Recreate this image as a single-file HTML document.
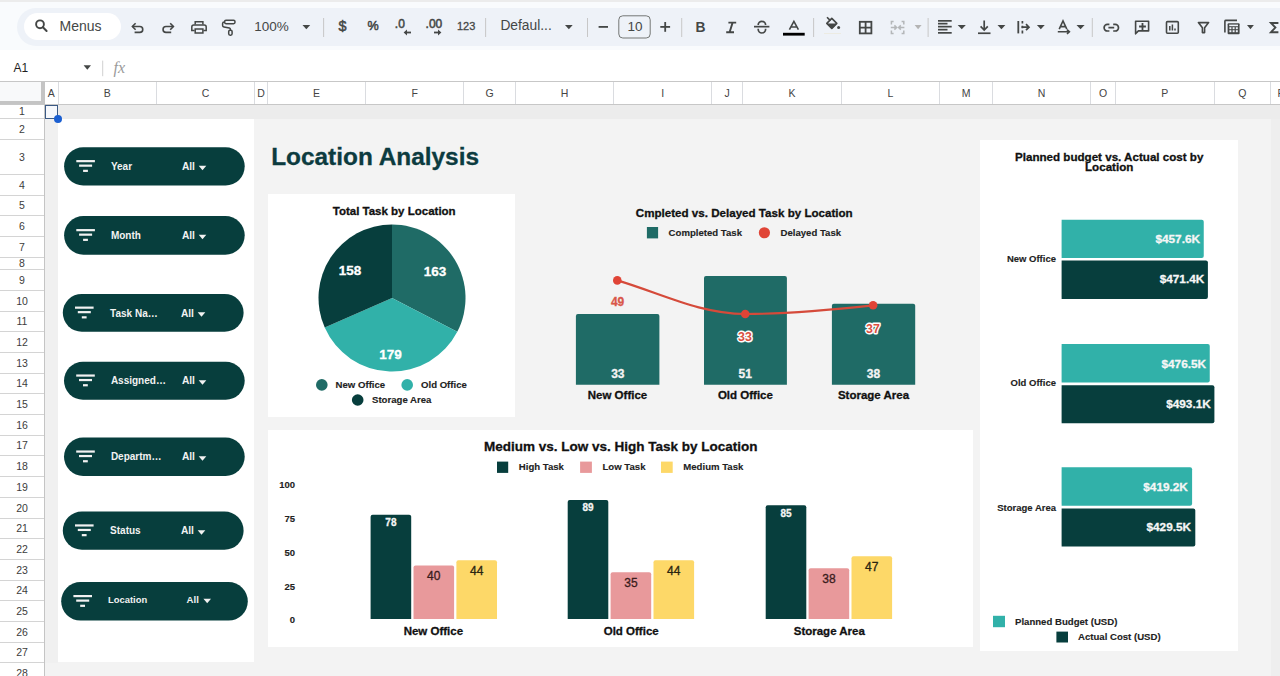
<!DOCTYPE html><html><head><meta charset="utf-8"><style>
*{box-sizing:border-box;margin:0;padding:0}
html,body{width:1280px;height:676px;overflow:hidden}
body{position:relative;background:#fff;font-family:"Liberation Sans",sans-serif;color:#1f1f1f}
div,span,svg{position:absolute}
.t{white-space:nowrap;line-height:1}
.b{font-weight:bold}
</style></head><body>
<div style="left:0px;top:0px;width:1280px;height:2px;background:#ececec;"></div>
<div style="left:0px;top:2px;width:1280px;height:48px;background:#f9fbfd;"></div>
<div style="left:17px;top:8px;width:1300px;height:38px;background:#eef2f8;border-radius:19px"></div>
<div style="left:24px;top:13px;width:97px;height:27px;background:#fff;border-radius:14px"></div>
<div style="left:0px;top:50px;width:1280px;height:31px;background:#fff;"></div>
<svg style="left:0;top:0" width="1280" height="50"><circle cx="40" cy="24.3" r="3.9" stroke="#444746" stroke-width="1.9" fill="none"/><line x1="42.9" y1="27.3" x2="46.6" y2="31" stroke="#444746" stroke-width="2" stroke-linecap="round"/><path d="M132.6 26.5 H139.8 A2.95 2.95 0 0 1 139.8 32.4 H134.6" stroke="#444746" stroke-width="1.6" fill="none"/><path d="M135.6 23.3 L132.4 26.5 L135.6 29.7" stroke="#444746" stroke-width="1.6" fill="none"/><path d="M173.2 26.5 H166 A2.95 2.95 0 0 0 166 32.4 H171.2" stroke="#444746" stroke-width="1.6" fill="none"/><path d="M170.2 23.3 L173.4 26.5 L170.2 29.7" stroke="#444746" stroke-width="1.6" fill="none"/><path d="M195.2 24.6 V21.7 H202.9 V24.6" stroke="#444746" stroke-width="1.5" fill="none"/><path d="M194.6 30.6 H191.8 V27 Q191.8 25 193.8 25 H204.2 Q206.2 25 206.2 27 V30.6 H203.4" stroke="#444746" stroke-width="1.5" fill="none"/><rect x="195.2" y="29" width="7.7" height="4" stroke="#444746" stroke-width="1.5" fill="none"/><rect x="224.6" y="20.3" width="10.4" height="3.4" rx="1.4" stroke="#444746" stroke-width="1.5" fill="none"/><path d="M224.4 22 Q222.6 22 222.6 23.6 V25.4 Q222.6 26.6 224 26.9 L229.4 28 Q230.4 28.2 230.4 29.4 V30" stroke="#444746" stroke-width="1.5" fill="none"/><rect x="228.7" y="30.2" width="3.4" height="5" rx="1.4" stroke="#444746" stroke-width="1.5" fill="none"/><path d="M302.5 25 H310.2 L306.35 29.2 Z" fill="#444746"/><path d="M565 25 H572.7 L568.85 29.2 Z" fill="#444746"/><path d="M914.6 25 H921.6 L918.1 29.2 Z" fill="#b4b4b4"/><path d="M957.7 25 H965.8 L961.75 29.2 Z" fill="#444746"/><path d="M997.5 25 H1005.4 L1001.45 29.2 Z" fill="#444746"/><path d="M1036.9 25 H1044.75 L1040.825 29.2 Z" fill="#444746"/><path d="M1076.5 25 H1084.6 L1080.55 29.2 Z" fill="#444746"/><path d="M1247 25 H1253.9 L1250.45 29.2 Z" fill="#444746"/><rect x="323.1" y="18" width="1" height="19" fill="#c7c7c7"/><rect x="485.1" y="18" width="1" height="19" fill="#c7c7c7"/><rect x="587.0" y="18" width="1" height="19" fill="#c7c7c7"/><rect x="681.2" y="18" width="1" height="19" fill="#c7c7c7"/><rect x="813.1" y="18" width="1" height="19" fill="#c7c7c7"/><rect x="927.6" y="18" width="1" height="19" fill="#c7c7c7"/><rect x="1091.8" y="18" width="1" height="19" fill="#c7c7c7"/><rect x="598.6" y="26" width="9.4" height="1.8" fill="#444746"/><rect x="660.3" y="26" width="9.8" height="1.8" fill="#444746"/><rect x="664.3" y="22" width="1.8" height="9.8" fill="#444746"/><rect x="618.8" y="15.8" width="31.4" height="22.2" rx="4" stroke="#747775" stroke-width="1" fill="none"/><path d="M728.4 22.6 H736.2 M726.2 32.2 H734 M732.6 22.6 L729.6 32.2" stroke="#444746" stroke-width="1.9" fill="none"/><path d="M758.2 25 A3.7 3.7 0 0 1 765.6 25" stroke="#444746" stroke-width="1.7" fill="none"/><rect x="754" y="25.8" width="15.4" height="1.7" fill="#444746"/><path d="M758.2 28.8 V29.3 A3.7 3.7 0 0 0 765.6 29.3 V28.8" stroke="#444746" stroke-width="1.7" fill="none"/><path d="M789.4 29.7 L793.9 21.4 L798.4 29.7 M790.9 27 H796.9" stroke="#444746" stroke-width="1.6" fill="none"/><rect x="783" y="32.8" width="21.7" height="2.8" fill="#000"/><path d="M826.8 23.4 L831.8 18.4 L836.8 23.4 L831.8 28.4 Z" stroke="#444746" stroke-width="1.6" fill="none" stroke-linejoin="round"/><path d="M826.4 23.6 H837.2 L831.8 29 Z" fill="#444746"/><path d="M827 17.2 L830.4 20.6" stroke="#444746" stroke-width="1.6"/><circle cx="838.6" cy="27.6" r="1.5" fill="#444746"/><rect x="824" y="33" width="17" height="1" fill="#ecebe2"/><rect x="859.8" y="21.8" width="11.6" height="11.6" stroke="#444746" stroke-width="1.8" fill="none"/><path d="M865.6 21.8 V33.4 M859.8 27.6 H871.4" stroke="#444746" stroke-width="1.8"/><path d="M893.6 21.6 H891.4 V24.6 M891.4 30.4 V33.4 H893.6 M901.6 21.6 H903.8 V24.6 M903.8 30.4 V33.4 H901.6" stroke="#b4b7b9" stroke-width="1.5" fill="none"/><path d="M890.8 27.5 H896.4 M894.4 25.4 L896.6 27.5 L894.4 29.6 M904.4 27.5 H898.8 M900.8 25.4 L898.6 27.5 L900.8 29.6" stroke="#b4b7b9" stroke-width="1.5" fill="none"/><rect x="938" y="20.0" width="13.7" height="1.7" fill="#444746"/><rect x="938" y="22.8" width="9.5" height="1.7" fill="#444746"/><rect x="938" y="25.8" width="13.7" height="1.7" fill="#444746"/><rect x="938" y="28.8" width="9.5" height="1.7" fill="#444746"/><rect x="938" y="31.999999999999996" width="13.7" height="1.7" fill="#444746"/><path d="M984.2 20.4 V29.8 M980.6 26.4 L984.2 30 L987.8 26.4" stroke="#444746" stroke-width="1.7" fill="none"/><rect x="978" y="32.4" width="12.5" height="1.7" fill="#444746"/><rect x="1017.4" y="21" width="1.8" height="12.4" fill="#444746"/><path d="M1022.4 21 V23.6 M1022.4 25.8 V28.2 M1022.4 30.4 V33.4" stroke="#444746" stroke-width="1.7"/><path d="M1021.6 27.2 H1029 M1026 24.2 L1029 27.2 L1026 30.2" stroke="#444746" stroke-width="1.7" fill="none"/><path d="M1059.2 29.2 L1063 21 L1066.8 29.2 M1060.4 26.6 H1065.6" stroke="#444746" stroke-width="1.6" fill="none"/><path d="M1057.8 31.8 H1069.4 M1067 29.6 L1069.4 31.8 L1067 34" stroke="#444746" stroke-width="1.6" fill="none"/><path d="M1109.4 24.4 H1107.4 A3.3 3.3 0 0 0 1107.4 31 H1109.4 M1113.2 24.4 H1115.2 A3.3 3.3 0 0 1 1115.2 31 H1113.2 M1108.4 27.7 H1114.2" stroke="#444746" stroke-width="1.7" fill="none"/><path d="M1135.6 33.8 V21.2 H1148.6 V30.9 H1138.4 Z" stroke="#444746" stroke-width="1.6" fill="none" stroke-linejoin="round"/><path d="M1142.5 23.1 V29.9 M1139.1 26.5 H1145.9" stroke="#444746" stroke-width="1.8"/><rect x="1166.5" y="21.6" width="11.8" height="11.6" rx="1" stroke="#444746" stroke-width="1.6" fill="none"/><path d="M1169.8 26 V30.6 M1172.4 24.4 V30.6 M1175 28.4 V30.6" stroke="#444746" stroke-width="1.5"/><path d="M1198.4 22.6 H1208.6 L1204.6 27.8 V32.6 H1202.4 V27.8 Z" stroke="#444746" stroke-width="1.6" fill="none" stroke-linejoin="round"/><path d="M1224.9 32.4 V21.2 A1 1 0 0 1 1225.9 20.4 H1237" stroke="#444746" stroke-width="1.6" fill="none"/><rect x="1227.6" y="23.2" width="12" height="11" rx="1" fill="#444746"/><rect x="1229.4" y="27.2" width="2" height="2" fill="#eef2f8"/><rect x="1229.4" y="30.2" width="2" height="2" fill="#eef2f8"/><rect x="1232.6" y="27.2" width="2" height="2" fill="#eef2f8"/><rect x="1232.6" y="30.2" width="2" height="2" fill="#eef2f8"/><rect x="1235.8" y="27.2" width="2" height="2" fill="#eef2f8"/><rect x="1235.8" y="30.2" width="2" height="2" fill="#eef2f8"/><rect x="1229.2" y="24.6" width="8.8" height="1.6" fill="#eef2f8"/><path d="M1278.4 23 H1271 L1275.4 27.6 L1271 32.2 H1278.4" stroke="#444746" stroke-width="1.9" fill="none" stroke-linejoin="miter"/></svg>
<span class="t" style="left:59.6px;top:19.1px;font-size:14px;color:#444746;font-weight:normal;">Menus</span>
<span class="t" style="left:254.2px;top:20.3px;font-size:13.5px;color:#444746;font-weight:normal;">100%</span>
<span class="t" style="left:338.4px;top:18.8px;font-size:14.4px;color:#444746;font-weight:normal;-webkit-text-stroke:0.5px #444746">$</span>
<span class="t" style="left:367.4px;top:20.2px;font-size:12.6px;color:#444746;font-weight:normal;-webkit-text-stroke:0.5px #444746">%</span>
<span class="t" style="left:394.8px;top:17.8px;font-size:12px;color:#444746;font-weight:normal;-webkit-text-stroke:0.5px #444746">.0</span>
<svg style="left:0;top:0" width="1280" height="50"><path d="M411 32.5 H405.5" stroke="#444746" stroke-width="1.8"/><path d="M403.6 32.5 L407 29.6 V35.4 Z" fill="#444746"/><path d="M434 32.5 H439.5" stroke="#444746" stroke-width="1.8"/><path d="M441.4 32.5 L438 29.6 V35.4 Z" fill="#444746"/></svg>
<span class="t" style="left:425.6px;top:17.8px;font-size:12px;color:#444746;font-weight:normal;-webkit-text-stroke:0.5px #444746">.00</span>
<span class="t" style="left:457px;top:21.1px;font-size:11px;color:#444746;font-weight:normal;-webkit-text-stroke:0.3px #444746">123</span>
<span class="t" style="left:500.4px;top:19.0px;font-size:13.8px;color:#444746;font-weight:normal;">Defaul...</span>
<span class="t" style="left:627.4px;top:20.3px;font-size:13.5px;color:#444746;font-weight:normal;">10</span>
<span class="t" style="left:695.6px;top:20.6px;font-size:13.8px;color:#444746;font-weight:bold;">B</span>
<span class="t" style="left:13.6px;top:61.6px;font-size:12px;color:#1f1f1f;font-weight:normal;">A1</span>
<svg style="left:0;top:50px" width="200" height="31"><path d="M83.6 15.3 H91 L87.3 19.7 Z" fill="#444746"/><rect x="102.2" y="10.6" width="1" height="15.6" fill="#d0d0d0"/></svg>
<span class="t" style="left:113.6px;top:59.6px;font-size:16px;color:#9a9a9a;font-weight:normal;font-family:'Liberation Serif';font-style:italic">fx</span>
<div style="left:0px;top:81px;width:1280px;height:1px;background:#c7c7c7;"></div>
<div style="left:0px;top:82px;width:1280px;height:22px;background:#fff;"></div>
<div style="left:0px;top:104px;width:1280px;height:1px;background:#c7c7c7;"></div>
<div style="left:0px;top:82px;width:40.5px;height:19px;background:#f8f9fa;"></div>
<div style="left:40.5px;top:82px;width:4.25px;height:22px;background:#c4c4c4;"></div>
<div style="left:0px;top:101px;width:44.75px;height:3.3px;background:#c4c4c4;"></div>
<span class="t" style="left:44.75px;top:88px;width:13.25px;text-align:center;font-size:10.5px;color:#444">A</span>
<div style="left:57.5px;top:82px;width:1px;height:22px;background:#dadce0;"></div>
<span class="t" style="left:58px;top:88px;width:98.5px;text-align:center;font-size:10.5px;color:#444">B</span>
<div style="left:156.0px;top:82px;width:1px;height:22px;background:#dadce0;"></div>
<span class="t" style="left:156.5px;top:88px;width:98.0px;text-align:center;font-size:10.5px;color:#444">C</span>
<div style="left:254.0px;top:82px;width:1px;height:22px;background:#dadce0;"></div>
<span class="t" style="left:254.5px;top:88px;width:13.0px;text-align:center;font-size:10.5px;color:#444">D</span>
<div style="left:267.0px;top:82px;width:1px;height:22px;background:#dadce0;"></div>
<span class="t" style="left:267.5px;top:88px;width:98.0px;text-align:center;font-size:10.5px;color:#444">E</span>
<div style="left:365.0px;top:82px;width:1px;height:22px;background:#dadce0;"></div>
<span class="t" style="left:365.5px;top:88px;width:98.25px;text-align:center;font-size:10.5px;color:#444">F</span>
<div style="left:463.25px;top:82px;width:1px;height:22px;background:#dadce0;"></div>
<span class="t" style="left:463.75px;top:88px;width:51.75px;text-align:center;font-size:10.5px;color:#444">G</span>
<div style="left:515.0px;top:82px;width:1px;height:22px;background:#dadce0;"></div>
<span class="t" style="left:515.5px;top:88px;width:98.0px;text-align:center;font-size:10.5px;color:#444">H</span>
<div style="left:613.0px;top:82px;width:1px;height:22px;background:#dadce0;"></div>
<span class="t" style="left:613.5px;top:88px;width:98.25px;text-align:center;font-size:10.5px;color:#444">I</span>
<div style="left:711.25px;top:82px;width:1px;height:22px;background:#dadce0;"></div>
<span class="t" style="left:711.75px;top:88px;width:30.75px;text-align:center;font-size:10.5px;color:#444">J</span>
<div style="left:742.0px;top:82px;width:1px;height:22px;background:#dadce0;"></div>
<span class="t" style="left:742.5px;top:88px;width:99.0px;text-align:center;font-size:10.5px;color:#444">K</span>
<div style="left:841.0px;top:82px;width:1px;height:22px;background:#dadce0;"></div>
<span class="t" style="left:841.5px;top:88px;width:98.0px;text-align:center;font-size:10.5px;color:#444">L</span>
<div style="left:939.0px;top:82px;width:1px;height:22px;background:#dadce0;"></div>
<span class="t" style="left:939.5px;top:88px;width:53.0px;text-align:center;font-size:10.5px;color:#444">M</span>
<div style="left:992.0px;top:82px;width:1px;height:22px;background:#dadce0;"></div>
<span class="t" style="left:992.5px;top:88px;width:98.25px;text-align:center;font-size:10.5px;color:#444">N</span>
<div style="left:1090.25px;top:82px;width:1px;height:22px;background:#dadce0;"></div>
<span class="t" style="left:1090.75px;top:88px;width:24.75px;text-align:center;font-size:10.5px;color:#444">O</span>
<div style="left:1115.0px;top:82px;width:1px;height:22px;background:#dadce0;"></div>
<span class="t" style="left:1115.5px;top:88px;width:98.75px;text-align:center;font-size:10.5px;color:#444">P</span>
<div style="left:1213.75px;top:82px;width:1px;height:22px;background:#dadce0;"></div>
<span class="t" style="left:1214.25px;top:88px;width:56.25px;text-align:center;font-size:10.5px;color:#444">Q</span>
<div style="left:1270.0px;top:82px;width:1px;height:22px;background:#dadce0;"></div>
<span class="t" style="left:1270.5px;top:88px;width:21.5px;text-align:center;font-size:10.5px;color:#444">R</span>
<div style="left:0px;top:105px;width:44px;height:571px;background:#fff;"></div>
<div style="left:0px;top:118.0px;width:44px;height:1px;background:#d4d4d4;"></div>
<span class="t" style="left:0;top:105.60000000000001px;width:44px;text-align:center;font-size:10.5px;color:#3c3c3c">1</span>
<div style="left:0px;top:138.5px;width:44px;height:1px;background:#d4d4d4;"></div>
<span class="t" style="left:0;top:123.65px;width:44px;text-align:center;font-size:10.5px;color:#3c3c3c">2</span>
<div style="left:0px;top:173.9px;width:44px;height:1px;background:#d4d4d4;"></div>
<span class="t" style="left:0;top:151.6px;width:44px;text-align:center;font-size:10.5px;color:#3c3c3c">3</span>
<div style="left:0px;top:194.5px;width:44px;height:1px;background:#d4d4d4;"></div>
<span class="t" style="left:0;top:179.6px;width:44px;text-align:center;font-size:10.5px;color:#3c3c3c">4</span>
<div style="left:0px;top:215.1px;width:44px;height:1px;background:#d4d4d4;"></div>
<span class="t" style="left:0;top:200.20000000000002px;width:44px;text-align:center;font-size:10.5px;color:#3c3c3c">5</span>
<div style="left:0px;top:235.7px;width:44px;height:1px;background:#d4d4d4;"></div>
<span class="t" style="left:0;top:220.79999999999998px;width:44px;text-align:center;font-size:10.5px;color:#3c3c3c">6</span>
<div style="left:0px;top:256.5px;width:44px;height:1px;background:#d4d4d4;"></div>
<span class="t" style="left:0;top:241.5px;width:44px;text-align:center;font-size:10.5px;color:#3c3c3c">7</span>
<div style="left:0px;top:269.1px;width:44px;height:1px;background:#d4d4d4;"></div>
<span class="t" style="left:0;top:258.2px;width:44px;text-align:center;font-size:10.5px;color:#3c3c3c">8</span>
<div style="left:0px;top:289.8px;width:44px;height:1px;background:#d4d4d4;"></div>
<span class="t" style="left:0;top:274.85px;width:44px;text-align:center;font-size:10.5px;color:#3c3c3c">9</span>
<div style="left:0px;top:310.5px;width:44px;height:1px;background:#d4d4d4;"></div>
<span class="t" style="left:0;top:295.54999999999995px;width:44px;text-align:center;font-size:10.5px;color:#3c3c3c">10</span>
<div style="left:0px;top:331.2px;width:44px;height:1px;background:#d4d4d4;"></div>
<span class="t" style="left:0;top:316.25px;width:44px;text-align:center;font-size:10.5px;color:#3c3c3c">11</span>
<div style="left:0px;top:351.9px;width:44px;height:1px;background:#d4d4d4;"></div>
<span class="t" style="left:0;top:336.94999999999993px;width:44px;text-align:center;font-size:10.5px;color:#3c3c3c">12</span>
<div style="left:0px;top:372.6px;width:44px;height:1px;background:#d4d4d4;"></div>
<span class="t" style="left:0;top:357.65px;width:44px;text-align:center;font-size:10.5px;color:#3c3c3c">13</span>
<div style="left:0px;top:393.3px;width:44px;height:1px;background:#d4d4d4;"></div>
<span class="t" style="left:0;top:378.35px;width:44px;text-align:center;font-size:10.5px;color:#3c3c3c">14</span>
<div style="left:0px;top:414.0px;width:44px;height:1px;background:#d4d4d4;"></div>
<span class="t" style="left:0;top:399.04999999999995px;width:44px;text-align:center;font-size:10.5px;color:#3c3c3c">15</span>
<div style="left:0px;top:434.7px;width:44px;height:1px;background:#d4d4d4;"></div>
<span class="t" style="left:0;top:419.75px;width:44px;text-align:center;font-size:10.5px;color:#3c3c3c">16</span>
<div style="left:0px;top:455.4px;width:44px;height:1px;background:#d4d4d4;"></div>
<span class="t" style="left:0;top:440.44999999999993px;width:44px;text-align:center;font-size:10.5px;color:#3c3c3c">17</span>
<div style="left:0px;top:476.1px;width:44px;height:1px;background:#d4d4d4;"></div>
<span class="t" style="left:0;top:461.15px;width:44px;text-align:center;font-size:10.5px;color:#3c3c3c">18</span>
<div style="left:0px;top:496.8px;width:44px;height:1px;background:#d4d4d4;"></div>
<span class="t" style="left:0;top:481.85px;width:44px;text-align:center;font-size:10.5px;color:#3c3c3c">19</span>
<div style="left:0px;top:517.5px;width:44px;height:1px;background:#d4d4d4;"></div>
<span class="t" style="left:0;top:502.54999999999995px;width:44px;text-align:center;font-size:10.5px;color:#3c3c3c">20</span>
<div style="left:0px;top:538.2px;width:44px;height:1px;background:#d4d4d4;"></div>
<span class="t" style="left:0;top:523.25px;width:44px;text-align:center;font-size:10.5px;color:#3c3c3c">21</span>
<div style="left:0px;top:558.9px;width:44px;height:1px;background:#d4d4d4;"></div>
<span class="t" style="left:0;top:543.9499999999999px;width:44px;text-align:center;font-size:10.5px;color:#3c3c3c">22</span>
<div style="left:0px;top:579.6px;width:44px;height:1px;background:#d4d4d4;"></div>
<span class="t" style="left:0;top:564.65px;width:44px;text-align:center;font-size:10.5px;color:#3c3c3c">23</span>
<div style="left:0px;top:600.3px;width:44px;height:1px;background:#d4d4d4;"></div>
<span class="t" style="left:0;top:585.35px;width:44px;text-align:center;font-size:10.5px;color:#3c3c3c">24</span>
<div style="left:0px;top:621.0px;width:44px;height:1px;background:#d4d4d4;"></div>
<span class="t" style="left:0;top:606.05px;width:44px;text-align:center;font-size:10.5px;color:#3c3c3c">25</span>
<div style="left:0px;top:641.7px;width:44px;height:1px;background:#d4d4d4;"></div>
<span class="t" style="left:0;top:626.75px;width:44px;text-align:center;font-size:10.5px;color:#3c3c3c">26</span>
<div style="left:0px;top:662.4px;width:44px;height:1px;background:#d4d4d4;"></div>
<span class="t" style="left:0;top:647.4499999999999px;width:44px;text-align:center;font-size:10.5px;color:#3c3c3c">27</span>
<div style="left:0px;top:683.1px;width:44px;height:1px;background:#d4d4d4;"></div>
<span class="t" style="left:0;top:668.15px;width:44px;text-align:center;font-size:10.5px;color:#3c3c3c">28</span>
<div style="left:43.8px;top:104px;width:1.2px;height:572px;background:#c4c4c4;"></div>
<div style="left:45px;top:105px;width:1235px;height:571px;background:#f3f3f3;"></div>
<div style="left:45px;top:105px;width:1235px;height:13.5px;background:#ececec;"></div>
<div style="left:45px;top:118.5px;width:13px;height:544px;background:#f0f0f0;"></div>
<div style="left:45px;top:105px;width:13px;height:13.5px;background:#f6f8fc;"></div>
<div style="left:1270.5px;top:118.5px;width:10px;height:560px;background:#eeeeee;"></div>
<div style="left:58px;top:118.5px;width:196px;height:543.5px;background:#fff;"></div>
<svg style="left:0;top:0" width="1280" height="676"><rect x="64.1" y="147.2" width="180.6" height="38.3" rx="19.15" fill="#073e3d"/><rect x="76.3" y="160.04999999999998" width="18.6" height="2.2" fill="#f2f2f2"/><rect x="79.1" y="164.54999999999998" width="13" height="2.2" fill="#f2f2f2"/><rect x="83.1" y="169.75" width="4.8" height="2.2" fill="#f2f2f2"/><text x="110.9" y="170.04999999999998" font-size="10" font-weight="bold" fill="#f2f2f2">Year</text><text x="181.9" y="170.04999999999998" font-size="10.2" font-weight="bold" fill="#f2f2f2">All</text><path d="M198.7 165.85 H206.29999999999998 L202.5 170.35 Z" fill="#f2f2f2"/><rect x="64.1" y="216" width="180.6" height="38.7" rx="19.35" fill="#073e3d"/><rect x="76.3" y="229.04999999999998" width="18.6" height="2.2" fill="#f2f2f2"/><rect x="79.1" y="233.54999999999998" width="13" height="2.2" fill="#f2f2f2"/><rect x="83.1" y="238.75" width="4.8" height="2.2" fill="#f2f2f2"/><text x="110.9" y="239.04999999999998" font-size="10" font-weight="bold" fill="#f2f2f2">Month</text><text x="181.9" y="239.04999999999998" font-size="10.2" font-weight="bold" fill="#f2f2f2">All</text><path d="M198.7 234.85 H206.29999999999998 L202.5 239.35 Z" fill="#f2f2f2"/><rect x="62.8" y="293.9" width="180.8" height="37.9" rx="18.95" fill="#073e3d"/><rect x="75.0" y="306.54999999999995" width="18.6" height="2.2" fill="#f2f2f2"/><rect x="77.8" y="311.04999999999995" width="13" height="2.2" fill="#f2f2f2"/><rect x="81.8" y="316.24999999999994" width="4.8" height="2.2" fill="#f2f2f2"/><text x="110.10000000000001" y="316.54999999999995" font-size="10" font-weight="bold" fill="#f2f2f2">Task Na…</text><text x="180.9" y="316.54999999999995" font-size="10.2" font-weight="bold" fill="#f2f2f2">All</text><path d="M197.7 312.34999999999997 H205.29999999999998 L201.5 316.84999999999997 Z" fill="#f2f2f2"/><rect x="64" y="361.8" width="180.7" height="37.9" rx="18.95" fill="#073e3d"/><rect x="76.2" y="374.45" width="18.6" height="2.2" fill="#f2f2f2"/><rect x="79.0" y="378.95" width="13" height="2.2" fill="#f2f2f2"/><rect x="83.0" y="384.15" width="4.8" height="2.2" fill="#f2f2f2"/><text x="110.9" y="384.45" font-size="10" font-weight="bold" fill="#f2f2f2">Assigned…</text><text x="181.9" y="384.45" font-size="10.2" font-weight="bold" fill="#f2f2f2">All</text><path d="M198.7 380.25 H206.29999999999998 L202.5 384.75 Z" fill="#f2f2f2"/><rect x="64" y="437.6" width="180.7" height="38.3" rx="19.15" fill="#073e3d"/><rect x="76.2" y="450.45" width="18.6" height="2.2" fill="#f2f2f2"/><rect x="79.0" y="454.95" width="13" height="2.2" fill="#f2f2f2"/><rect x="83.0" y="460.15" width="4.8" height="2.2" fill="#f2f2f2"/><text x="110.9" y="460.45" font-size="10" font-weight="bold" fill="#f2f2f2">Departm…</text><text x="181.9" y="460.45" font-size="10.2" font-weight="bold" fill="#f2f2f2">All</text><path d="M198.7 456.25 H206.29999999999998 L202.5 460.75 Z" fill="#f2f2f2"/><rect x="62.8" y="511.5" width="180.8" height="38.3" rx="19.15" fill="#073e3d"/><rect x="75.0" y="524.35" width="18.6" height="2.2" fill="#f2f2f2"/><rect x="77.8" y="528.85" width="13" height="2.2" fill="#f2f2f2"/><rect x="81.8" y="534.05" width="4.8" height="2.2" fill="#f2f2f2"/><text x="110.10000000000001" y="534.35" font-size="10" font-weight="bold" fill="#f2f2f2">Status</text><text x="180.9" y="534.35" font-size="10.2" font-weight="bold" fill="#f2f2f2">All</text><path d="M197.7 530.15 H205.29999999999998 L201.5 534.65 Z" fill="#f2f2f2"/><rect x="61.2" y="582" width="186.6" height="38.6" rx="19.3" fill="#073e3d"/><rect x="73.4" y="595.0" width="18.6" height="2.2" fill="#f2f2f2"/><rect x="76.2" y="599.5" width="13" height="2.2" fill="#f2f2f2"/><rect x="80.2" y="604.6999999999999" width="4.8" height="2.2" fill="#f2f2f2"/><text x="108.10000000000001" y="602.9" font-size="9.4" font-weight="bold" fill="#f2f2f2">Location</text><text x="186.6" y="602.9" font-size="9.6" font-weight="bold" fill="#f2f2f2">All</text><path d="M203.39999999999998 598.6999999999999 H210.99999999999997 L207.2 603.1999999999999 Z" fill="#f2f2f2"/></svg>
<div style="left:267.9px;top:194px;width:246.9px;height:222.5px;background:#fff;"></div>
<div style="left:267.9px;top:429.75px;width:704.8px;height:217.5px;background:#fff;"></div>
<div style="left:979.8px;top:140.3px;width:258.2px;height:510.5px;background:#fff;"></div>
<svg style="left:0;top:0;font-family:'Liberation Sans'" width="1280" height="676"><text x="271.2" y="165.3" font-size="24.4" font-weight="bold" fill="#0c3b3f" text-anchor="start" stroke="#0c3b3f" stroke-width="0.3">Location Analysis</text><path d="M392 298 L392.00 224.50 A73.5 73.5 0 0 1 457.28 331.78 Z" fill="#1f6b66"/><path d="M392 298 L457.28 331.78 A73.5 73.5 0 0 1 324.73 327.61 Z" fill="#31b1a9"/><path d="M392 298 L324.73 327.61 A73.5 73.5 0 0 1 392.00 224.50 Z" fill="#073e3d"/><text x="394.2" y="215.3" font-size="11.5" font-weight="bold" fill="#111111" text-anchor="middle" stroke="#111111" stroke-width="0.3">Total Task by Location</text><text x="350" y="274.8" font-size="13.5" font-weight="bold" fill="#fff" text-anchor="middle" stroke="#fff" stroke-width="0.3">158</text><text x="435" y="276" font-size="13.5" font-weight="bold" fill="#fff" text-anchor="middle" stroke="#fff" stroke-width="0.3">163</text><text x="390.4" y="359.1" font-size="13.5" font-weight="bold" fill="#fff" text-anchor="middle" stroke="#fff" stroke-width="0.3">179</text><circle cx="321.8" cy="384.9" r="5.8" fill="#1f6b66"/><circle cx="407.2" cy="384.9" r="5.8" fill="#31b1a9"/><circle cx="357.7" cy="400" r="5.8" fill="#073e3d"/><text x="335.6" y="387.8" font-size="9.6" font-weight="bold" fill="#222" text-anchor="start" stroke="#222" stroke-width="0.12">New Office</text><text x="421" y="387.8" font-size="9.6" font-weight="bold" fill="#222" text-anchor="start" stroke="#222" stroke-width="0.12">Old Office</text><text x="372" y="403" font-size="9.6" font-weight="bold" fill="#222" text-anchor="start" stroke="#222" stroke-width="0.12">Storage Area</text><text x="744.25" y="217.2" font-size="11.6" font-weight="bold" fill="#111111" text-anchor="middle" stroke="#111111" stroke-width="0.3">Cmpleted vs. Delayed Task by Location</text><rect x="646.9" y="227" width="11.2" height="11.4" fill="#1f6b66"/><text x="668.6" y="236" font-size="9.6" font-weight="bold" fill="#222" text-anchor="start" stroke="#222" stroke-width="0.12">Completed Task</text><circle cx="764.4" cy="232.75" r="5.6" fill="#e04436"/><text x="780.5" y="236" font-size="9.6" font-weight="bold" fill="#222" text-anchor="start" stroke="#222" stroke-width="0.12">Delayed Task</text><path d="M575.9 384.75 V316 Q575.9 314 577.9 314 H657.4 Q659.4 314 659.4 316 V384.75 Z" fill="#1f6b66"/><path d="M704 384.75 V277.9 Q704 275.9 706 275.9 H784.9 Q786.9 275.9 786.9 277.9 V384.75 Z" fill="#1f6b66"/><path d="M831.9 384.75 V305.8 Q831.9 303.8 833.9 303.8 H913.2 Q915.2 303.8 915.2 305.8 V384.75 Z" fill="#1f6b66"/><text x="617.85" y="377.8" font-size="12" font-weight="bold" fill="#f4f4f4" text-anchor="middle" stroke="#f4f4f4" stroke-width="0.3">33</text><text x="745.3" y="377.8" font-size="12" font-weight="bold" fill="#f4f4f4" text-anchor="middle" stroke="#f4f4f4" stroke-width="0.3">51</text><text x="873.5" y="377.9" font-size="12" font-weight="bold" fill="#f4f4f4" text-anchor="middle" stroke="#f4f4f4" stroke-width="0.3">38</text><path d="M617.3 280.4 C660 293, 700 314, 745.25 314 C790 314, 830 310, 873.1 305.3" stroke="#d54a3a" stroke-width="2.2" fill="none"/><circle cx="617.3" cy="280.4" r="4.3" fill="#e04436"/><circle cx="745.25" cy="314" r="4.3" fill="#e04436"/><circle cx="873.1" cy="305.3" r="4.3" fill="#e04436"/><text x="617.6" y="306" font-size="12" font-weight="bold" fill="#d9574a" text-anchor="middle" stroke="#d9574a" stroke-width="0.3">49</text><text x="745" y="340.8" font-size="12.4" font-weight="bold" fill="#d9503f" text-anchor="middle" stroke="#fff" stroke-width="2.8" paint-order="stroke" stroke-linejoin="round">33</text><text x="873" y="332.5" font-size="12.4" font-weight="bold" fill="#d9503f" text-anchor="middle" stroke="#fff" stroke-width="2.8" paint-order="stroke" stroke-linejoin="round">37</text><text x="617.5" y="399" font-size="11.5" font-weight="bold" fill="#111111" text-anchor="middle" stroke="#111111" stroke-width="0.3">New Office</text><text x="745.4" y="399" font-size="11.5" font-weight="bold" fill="#111111" text-anchor="middle" stroke="#111111" stroke-width="0.3">Old Office</text><text x="873.5" y="399.2" font-size="11.5" font-weight="bold" fill="#111111" text-anchor="middle" stroke="#111111" stroke-width="0.3">Storage Area</text><text x="620.7" y="451.1" font-size="13.5" font-weight="bold" fill="#111111" text-anchor="middle" stroke="#111111" stroke-width="0.3">Medium vs. Low vs. High Task by Location</text><rect x="497" y="461.6" width="11.2" height="11.3" fill="#073e3d"/><rect x="580.1" y="461.6" width="11.8" height="11.3" fill="#e8999b"/><rect x="661" y="461.6" width="11.7" height="11.3" fill="#fdd868"/><text x="518.8" y="469.8" font-size="9.6" font-weight="bold" fill="#222" text-anchor="start" stroke="#222" stroke-width="0.12">High Task</text><text x="602.5" y="469.8" font-size="9.6" font-weight="bold" fill="#222" text-anchor="start" stroke="#222" stroke-width="0.12">Low Task</text><text x="683.3" y="469.8" font-size="9.6" font-weight="bold" fill="#222" text-anchor="start" stroke="#222" stroke-width="0.12">Medium Task</text><text x="295" y="488.4" font-size="9.5" font-weight="bold" fill="#222" text-anchor="end" stroke="#222" stroke-width="0.12">100</text><text x="295" y="522.4" font-size="9.5" font-weight="bold" fill="#222" text-anchor="end" stroke="#222" stroke-width="0.12">75</text><text x="295" y="555.8" font-size="9.5" font-weight="bold" fill="#222" text-anchor="end" stroke="#222" stroke-width="0.12">50</text><text x="295" y="590" font-size="9.5" font-weight="bold" fill="#222" text-anchor="end" stroke="#222" stroke-width="0.12">25</text><text x="295" y="623" font-size="9.5" font-weight="bold" fill="#222" text-anchor="end" stroke="#222" stroke-width="0.12">0</text><path d="M370.60 619 V516.67 Q370.60 514.67 372.60 514.67 H409.20 Q411.20 514.67 411.20 516.67 V619 Z" fill="#073e3d"/><text x="390.90000000000003" y="526.0749999999999" font-size="10" font-weight="bold" fill="#f4f4f4" text-anchor="middle" stroke="#f4f4f4" stroke-width="0.3">78</text><path d="M413.50 619 V567.50 Q413.50 565.50 415.50 565.50 H452.10 Q454.10 565.50 454.10 567.50 V619 Z" fill="#e8999b"/><text x="433.8" y="580.1" font-size="12" font-weight="normal" fill="#3a1c1c" text-anchor="middle" stroke="#3a1c1c" stroke-width="0.3">40</text><path d="M456.40 619 V562.15 Q456.40 560.15 458.40 560.15 H495.00 Q497.00 560.15 497.00 562.15 V619 Z" fill="#fdd868"/><text x="476.70000000000005" y="574.75" font-size="12" font-weight="normal" fill="#2a2410" text-anchor="middle" stroke="#2a2410" stroke-width="0.3">44</text><path d="M567.70 619 V501.96 Q567.70 499.96 569.70 499.96 H606.30 Q608.30 499.96 608.30 501.96 V619 Z" fill="#073e3d"/><text x="588.0" y="511.36249999999995" font-size="10" font-weight="bold" fill="#f4f4f4" text-anchor="middle" stroke="#f4f4f4" stroke-width="0.3">89</text><path d="M610.60 619 V574.19 Q610.60 572.19 612.60 572.19 H649.20 Q651.20 572.19 651.20 574.19 V619 Z" fill="#e8999b"/><text x="630.9000000000001" y="586.7875" font-size="12" font-weight="normal" fill="#3a1c1c" text-anchor="middle" stroke="#3a1c1c" stroke-width="0.3">35</text><path d="M653.50 619 V562.15 Q653.50 560.15 655.50 560.15 H692.10 Q694.10 560.15 694.10 562.15 V619 Z" fill="#fdd868"/><text x="673.8" y="574.75" font-size="12" font-weight="normal" fill="#2a2410" text-anchor="middle" stroke="#2a2410" stroke-width="0.3">44</text><path d="M765.70 619 V507.31 Q765.70 505.31 767.70 505.31 H804.30 Q806.30 505.31 806.30 507.31 V619 Z" fill="#073e3d"/><text x="786.0" y="516.7125" font-size="10" font-weight="bold" fill="#f4f4f4" text-anchor="middle" stroke="#f4f4f4" stroke-width="0.3">85</text><path d="M808.60 619 V570.17 Q808.60 568.17 810.60 568.17 H847.20 Q849.20 568.17 849.20 570.17 V619 Z" fill="#e8999b"/><text x="828.9000000000001" y="582.775" font-size="12" font-weight="normal" fill="#3a1c1c" text-anchor="middle" stroke="#3a1c1c" stroke-width="0.3">38</text><path d="M851.50 619 V558.14 Q851.50 556.14 853.50 556.14 H890.10 Q892.10 556.14 892.10 558.14 V619 Z" fill="#fdd868"/><text x="871.8" y="570.7375000000001" font-size="12" font-weight="normal" fill="#2a2410" text-anchor="middle" stroke="#2a2410" stroke-width="0.3">47</text><text x="433.4" y="634.9" font-size="11.5" font-weight="bold" fill="#111111" text-anchor="middle" stroke="#111111" stroke-width="0.3">New Office</text><text x="631.2" y="634.9" font-size="11.5" font-weight="bold" fill="#111111" text-anchor="middle" stroke="#111111" stroke-width="0.3">Old Office</text><text x="829.3" y="634.9" font-size="11.5" font-weight="bold" fill="#111111" text-anchor="middle" stroke="#111111" stroke-width="0.3">Storage Area</text><text x="1109.2" y="160.5" font-size="11.6" font-weight="bold" fill="#111111" text-anchor="middle" stroke="#111111" stroke-width="0.3">Planned budget vs. Actual cost by</text><text x="1109.2" y="171.4" font-size="11.6" font-weight="bold" fill="#111111" text-anchor="middle" stroke="#111111" stroke-width="0.3">Location</text><path d="M1061.6 219.7 H1201.75 Q1203.75 219.7 1203.75 221.7 V256.1 Q1203.75 258.1 1201.75 258.1 H1061.6 Z" fill="#31b1a9"/><text x="1200.0" y="243.1" font-size="11.8" font-weight="bold" fill="#f6f6f6" text-anchor="end" stroke="#f6f6f6" stroke-width="0.3">$457.6K</text><path d="M1061.6 260.4 H1205.9 Q1207.9 260.4 1207.9 262.4 V297 Q1207.9 299 1205.9 299 H1061.6 Z" fill="#073e3d"/><text x="1204.25" y="283.4" font-size="11.8" font-weight="bold" fill="#f6f6f6" text-anchor="end" stroke="#f6f6f6" stroke-width="0.3">$471.4K</text><path d="M1061.6 344 H1207.75 Q1209.75 344 1209.75 346 V380.5 Q1209.75 382.5 1207.75 382.5 H1061.6 Z" fill="#31b1a9"/><text x="1206.1" y="367.5" font-size="11.8" font-weight="bold" fill="#f6f6f6" text-anchor="end" stroke="#f6f6f6" stroke-width="0.3">$476.5K</text><path d="M1061.6 385.3 H1212.4 Q1214.4 385.3 1214.4 387.3 V421.2 Q1214.4 423.2 1212.4 423.2 H1061.6 Z" fill="#073e3d"/><text x="1210.8" y="407.8" font-size="11.8" font-weight="bold" fill="#f6f6f6" text-anchor="end" stroke="#f6f6f6" stroke-width="0.3">$493.1K</text><path d="M1061.6 467.25 H1190.1 Q1192.1 467.25 1192.1 469.25 V503.7 Q1192.1 505.7 1190.1 505.7 H1061.6 Z" fill="#31b1a9"/><text x="1187.9" y="490.9" font-size="11.8" font-weight="bold" fill="#f6f6f6" text-anchor="end" stroke="#f6f6f6" stroke-width="0.3">$419.2K</text><path d="M1061.6 508.5 H1193.3 Q1195.3 508.5 1195.3 510.5 V544.6 Q1195.3 546.6 1193.3 546.6 H1061.6 Z" fill="#073e3d"/><text x="1191.1" y="531.2" font-size="11.8" font-weight="bold" fill="#f6f6f6" text-anchor="end" stroke="#f6f6f6" stroke-width="0.3">$429.5K</text><text x="1056" y="261.9" font-size="9.5" font-weight="bold" fill="#222" text-anchor="end" stroke="#222" stroke-width="0.12">New Office</text><text x="1056" y="386.25" font-size="9.5" font-weight="bold" fill="#222" text-anchor="end" stroke="#222" stroke-width="0.12">Old Office</text><text x="1056" y="511" font-size="9.5" font-weight="bold" fill="#222" text-anchor="end" stroke="#222" stroke-width="0.12">Storage Area</text><rect x="993" y="615.8" width="12" height="11.4" fill="#31b1a9"/><rect x="1056.4" y="631.6" width="11.6" height="10.9" fill="#073e3d"/><text x="1015" y="624.6" font-size="9.6" font-weight="bold" fill="#222" text-anchor="start" stroke="#222" stroke-width="0.12">Planned Budget (USD)</text><text x="1078" y="640.3" font-size="9.6" font-weight="bold" fill="#222" text-anchor="start" stroke="#222" stroke-width="0.12">Actual Cost (USD)</text></svg>
<div style="left:44.6px;top:104.6px;width:13.8px;height:14.2px;border:1.6px solid #3b5a85"></div>
<div style="left:54px;top:115px;width:8px;height:8px;border-radius:50%;background:#1b5fd1"></div>
</body></html>
